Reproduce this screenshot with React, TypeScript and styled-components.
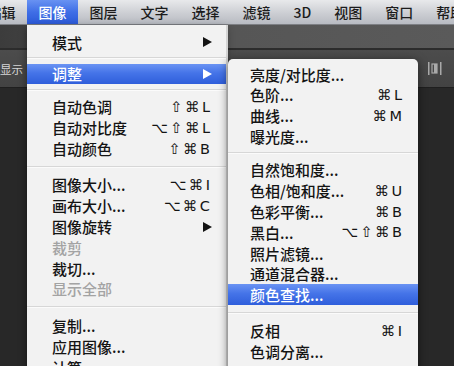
import React from "react";
import styled, { createGlobalStyle } from "styled-components";

const GlobalStyle = createGlobalStyle`
  html, body {
    margin: 0;
    padding: 0;
    background: #272727;
  }
  body {
    font-family: "Noto Sans CJK SC", "Liberation Sans", sans-serif;
  }
`;

const Screen = styled.div`
  position: relative;
  width: 454px;
  height: 366px;
  overflow: hidden;
  display: flex;
  flex-direction: column;
  background: #282828;
`;

const MenuBar = styled.div`
  flex: none;
  height: 25px;
  margin-left: -24px;
  display: flex;
  align-items: stretch;
  box-sizing: border-box;
  background: linear-gradient(#e8e9eb, #ccced3 55%, #b8bbc2);
  border-bottom: 1px solid #7d7f84;
`;

const BarItem = styled.div<{ $active?: boolean }>`
  display: flex;
  align-items: center;
  padding: 0 11.5px;
  font-size: 14px;
  font-weight: 500;
  white-space: nowrap;
  color: ${(p) => (p.$active ? "#fff" : "#1c1c1c")};
  background: ${(p) =>
    p.$active
      ? "linear-gradient(#6892f2, #3f6ee6 50%, #2c5ad9)"
      : "transparent"};
`;

const OptionsBar = styled.div`
  flex: none;
  height: 23px;
  background: linear-gradient(90deg, #3c3c3c, #555 40%, #5a5a5a);
  border-bottom: 2px solid #2c2c2c;
`;

const ToolStrip = styled.div`
  flex: none;
  height: 37px;
  display: flex;
  align-items: center;
  justify-content: space-between;
  padding-right: 12px;
  background: linear-gradient(#4c4c4c, #434343);
  border-bottom: 1px solid #1f1f1f;
`;

const StripLabel = styled.span`
  font-size: 11.5px;
  color: #d6d6d6;
  white-space: nowrap;
`;

const Workspace = styled.div`
  flex: 1;
  background: #282828;
`;

const Menu = styled.div<{ $left: number; $top: number; $width: number; $pad: number }>`
  position: absolute;
  left: ${(p) => p.$left}px;
  top: ${(p) => p.$top}px;
  width: ${(p) => p.$width}px;
  height: 400px;
  padding-top: ${(p) => p.$pad}px;
  box-sizing: border-box;
  background: #f2f2f2;
  display: flex;
  flex-direction: column;
`;

const MainMenu = styled(Menu)`
  box-shadow: 2px 0 0 #d4d4d4, 0 3px 8px rgba(0, 0, 0, 0.45);
`;

const SubMenu = styled(Menu)`
  border-radius: 5px 5px 0 0;
  box-shadow: 0 2px 10px rgba(0, 0, 0, 0.55);
`;

const Row = styled.div<{ $active?: boolean; $disabled?: boolean; $padL: number }>`
  flex: none;
  height: 20.8px;
  display: flex;
  align-items: center;
  justify-content: space-between;
  padding: 0 16px 0 ${(p) => p.$padL}px;
  font-size: 15px;
  font-weight: 500;
  white-space: nowrap;
  color: ${(p) => (p.$active ? "#fff" : p.$disabled ? "#a3a3a3" : "#141414")};
  background: ${(p) =>
    p.$active
      ? "linear-gradient(#6a93f3, #4574e8 45%, #2f5edb)"
      : "transparent"};
`;

const Keys = styled.span`
  font-family: "DejaVu Sans", sans-serif;
  font-size: 14.5px;
  letter-spacing: 2.5px;
  margin-right: -2.5px;
`;

const Separator = styled.div<{ $h: number }>`
  flex: none;
  height: ${(p) => p.$h}px;
  display: flex;
  align-items: center;
  &::after {
    content: "";
    flex: 1;
    height: 1px;
    background: #d7d7d7;
    border-bottom: 1px solid #fbfbfb;
  }
`;

type Item =
  | { sep: number }
  | { t: string; k?: string; arrow?: boolean; active?: boolean; disabled?: boolean };

const mainItems: Item[] = [
  { t: "模式", arrow: true },
  { sep: 11.2 },
  { t: "调整", arrow: true, active: true },
  { sep: 12.2 },
  { t: "自动色调", k: "⇧⌘L" },
  { t: "自动对比度", k: "⌥⇧⌘L" },
  { t: "自动颜色", k: "⇧⌘B" },
  { sep: 15.6 },
  { t: "图像大小...", k: "⌥⌘I" },
  { t: "画布大小...", k: "⌥⌘C" },
  { t: "图像旋转", arrow: true },
  { t: "裁剪", disabled: true },
  { t: "裁切..." },
  { t: "显示全部", disabled: true },
  { sep: 16.2 },
  { t: "复制..." },
  { t: "应用图像..." },
  { t: "计算..." },
];

const subItems: Item[] = [
  { t: "亮度/对比度..." },
  { t: "色阶...", k: "⌘L" },
  { t: "曲线...", k: "⌘M" },
  { t: "曝光度..." },
  { sep: 12.8 },
  { t: "自然饱和度..." },
  { t: "色相/饱和度...", k: "⌘U" },
  { t: "色彩平衡...", k: "⌘B" },
  { t: "黑白...", k: "⌥⇧⌘B" },
  { t: "照片滤镜..." },
  { t: "通道混合器..." },
  { t: "颜色查找...", active: true },
  { sep: 15.4 },
  { t: "反相", k: "⌘I" },
  { t: "色调分离..." },
];

const barItems = ["编辑", "图像", "图层", "文字", "选择", "滤镜", "3D", "视图", "窗口", "帮助"];

function Arrow() {
  return (
    <svg width="9" height="10" viewBox="0 0 9 10" style={{ marginRight: -2 }}>
      <polygon points="0,0 9,5 0,10" fill="currentColor" />
    </svg>
  );
}

function DistributeIcon() {
  return (
    <svg width="14" height="13" viewBox="0 0 14 13">
      <rect x="0" y="0" width="1.5" height="13" fill="#a9a9a9" />
      <rect x="4" y="2" width="5" height="9" fill="none" stroke="#a9a9a9" strokeWidth="1.2" />
      <rect x="6" y="2" width="3" height="9" fill="#a9a9a9" />
      <rect x="12" y="0" width="1.5" height="13" fill="#a9a9a9" />
    </svg>
  );
}

function MenuRows({ items, padL }: { items: Item[]; padL: number }) {
  return (
    <>
      {items.map((it, i) =>
        "sep" in it ? (
          <Separator key={i} $h={it.sep} />
        ) : (
          <Row key={i} $padL={padL} $active={it.active} $disabled={it.disabled}>
            <span>{it.t}</span>
            {it.k && <Keys>{it.k}</Keys>}
            {it.arrow && <Arrow />}
          </Row>
        )
      )}
    </>
  );
}

export default function App() {
  return (
    <>
      <GlobalStyle />
      <Screen>
        <MenuBar>
          {barItems.map((b) => (
            <BarItem key={b} $active={b === "图像"}>
              {b}
            </BarItem>
          ))}
        </MenuBar>
        <OptionsBar />
        <ToolStrip>
          <StripLabel>显示</StripLabel>
          <DistributeIcon />
        </ToolStrip>
        <Workspace />

        <MainMenu $left={27} $top={25} $width={199} $pad={6.6}>
          <MenuRows items={mainItems} padL={25} />
        </MainMenu>
        <SubMenu $left={228} $top={59} $width={190} $pad={4.6}>
          <MenuRows items={subItems} padL={22} />
        </SubMenu>
      </Screen>
    </>
  );
}
